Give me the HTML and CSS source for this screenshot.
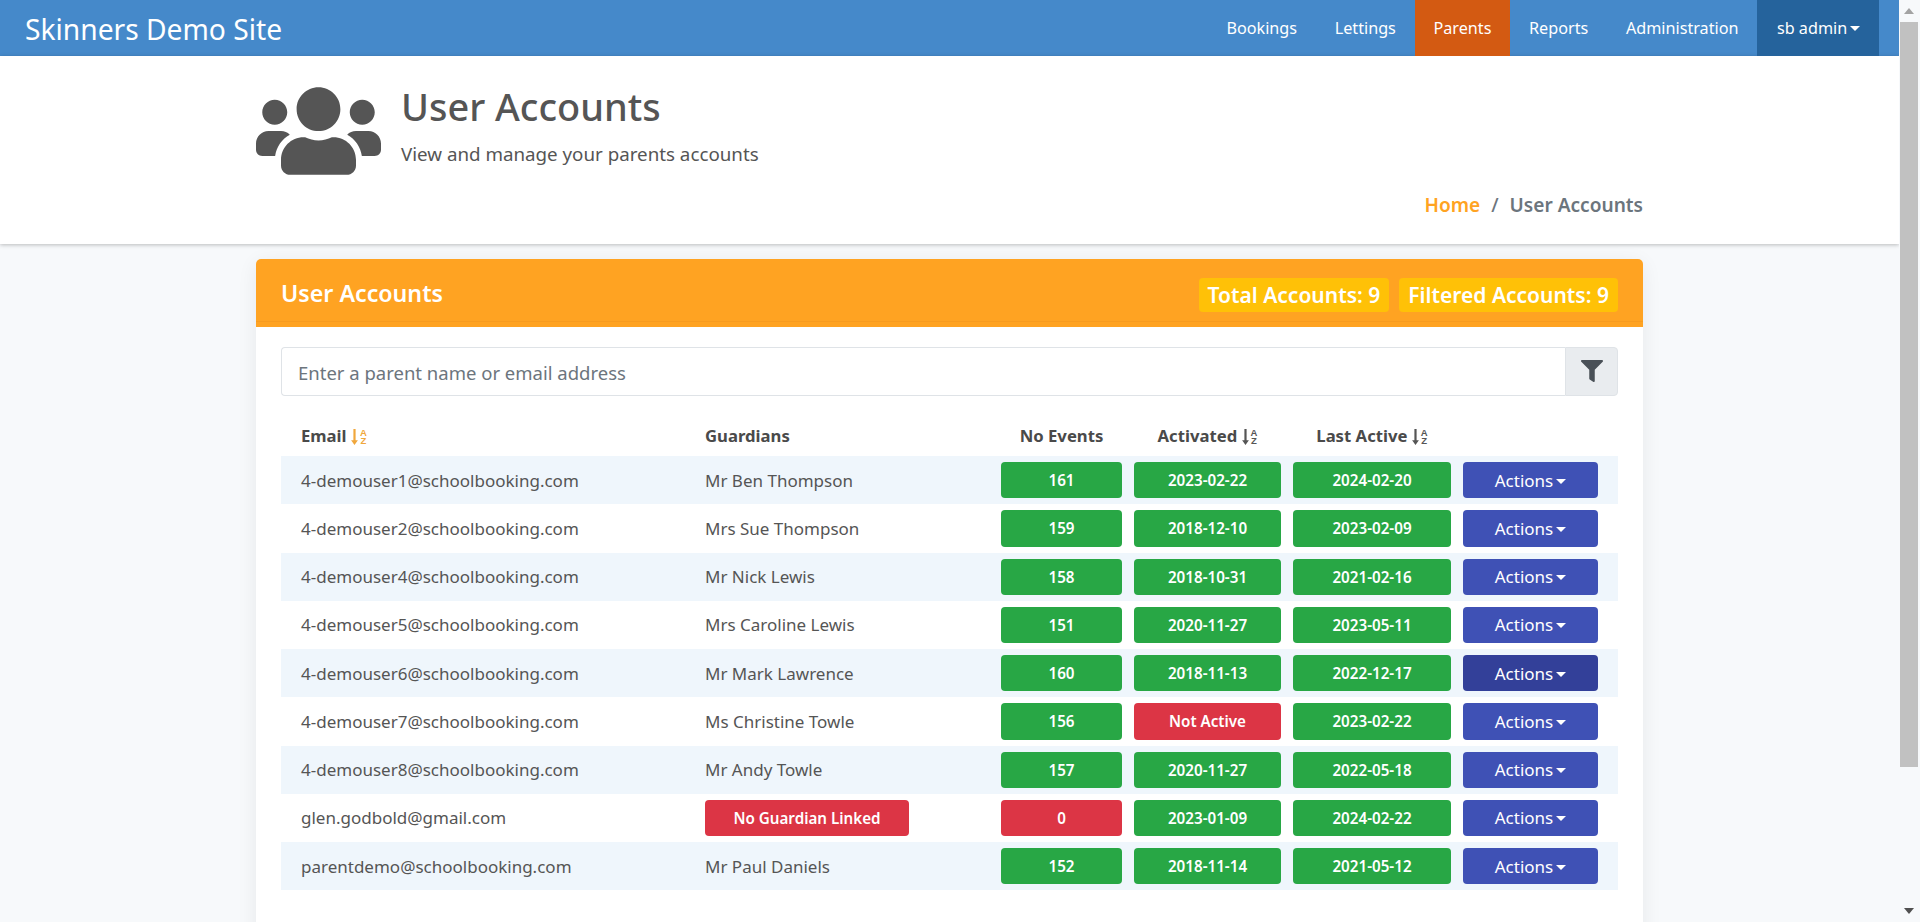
FILE: index.html
```html
<!DOCTYPE html>
<html lang="en">
<head>
  <meta charset="UTF-8" />
  <title>User Accounts</title>
  <link rel="stylesheet" href="styles.css">
</head>
<body>
  <svg class="icon-defs" width="0" height="0">
    <symbol id="caret" viewBox="0 0 10 5">
      <path d="M0 0h10L5 5z"/>
    </symbol>
    <symbol id="sort-arrow" viewBox="0 0 7 16">
      <path d="M2.4 0h2.2v11.2h2.3L3.5 16 .1 11.2h2.3z"/>
    </symbol>
  </svg>

  <div class="shell">
    <div class="page">
      <nav class="navbar">
        <a class="brand">Skinners Demo Site</a>
        <ul class="nav-links">
          <li>Bookings</li>
          <li>Lettings</li>
          <li class="active">Parents</li>
          <li>Reports</li>
          <li>Administration</li>
          <li class="user-menu">sb admin<svg class="caret"><use href="#caret"/></svg></li>
        </ul>
      </nav>

      <header class="page-header">
        <div class="container">
          <div class="header-top">
            <svg class="header-icon" viewBox="0 0 640 512"><path d="M96 224c35.3 0 64-28.7 64-64s-28.7-64-64-64-64 28.7-64 64 28.7 64 64 64zm448 0c35.3 0 64-28.7 64-64s-28.7-64-64-64-64 28.7-64 64 28.7 64 64 64zm32 32h-64c-17.6 0-33.5 7.1-45.1 18.6 40.3 22.1 68.9 62 75.1 109.4h66c17.7 0 32-14.3 32-32v-32c0-35.3-28.7-64-64-64zm-256 0c61.9 0 112-50.1 112-112S381.9 32 320 32 208 82.1 208 144s50.1 112 112 112zm76.8 32h-8.3c-20.8 10-43.9 16-68.5 16s-47.6-6-68.5-16h-8.3C179.6 288 128 339.6 128 403.2V432c0 26.5 21.5 48 48 48h288c26.5 0 48-21.5 48-48v-28.8c0-63.6-51.6-115.2-115.2-115.2zm-223.7-13.4C161.5 263.1 145.6 256 128 256H64c-35.3 0-64 28.7-64 64v32c0 17.7 14.3 32 32 32h65.9c6.3-47.4 34.9-87.3 75.2-109.4z"/></svg>
            <div class="header-text">
              <h1>User Accounts</h1>
              <p>View and manage your parents accounts</p>
            </div>
          </div>
          <div class="breadcrumb">
            <a>Home</a><span class="sep">/</span><span>User Accounts</span>
          </div>
        </div>
      </header>

      <main class="container">
        <section class="card">
          <div class="card-header">
            <h2>User Accounts</h2>
            <div class="counts">
              <span class="count">Total Accounts: 9</span>
              <span class="count">Filtered Accounts: 9</span>
            </div>
          </div>
          <div class="card-body">
            <div class="search">
              <input type="text" placeholder="Enter a parent name or email address">
              <button class="search-btn"><svg viewBox="0 0 512 512"><path d="M487.976 0H24.028C2.71 0-8.047 25.866 7.058 40.971L192 225.941V432c0 7.831 3.821 15.17 10.237 19.662l80 55.98C298.02 518.69 320 507.493 320 487.98V225.941l184.947-184.97C520.021 25.896 509.338 0 487.976 0z"/></svg></button>
            </div>

            <table class="accounts">
              <colgroup>
                <col class="col-email"><col class="col-guardian"><col class="col-events"><col class="col-activated"><col class="col-last"><col class="col-actions">
              </colgroup>
              <thead>
                <tr>
                  <th class="text-col">Email <span class="sort sort-on"><svg><use href="#sort-arrow"/></svg><span class="sort-az">A<br>Z</span></span></th>
                  <th class="text-col">Guardians</th>
                  <th>No Events</th>
                  <th>Activated <span class="sort"><svg><use href="#sort-arrow"/></svg><span class="sort-az">A<br>Z</span></span></th>
                  <th>Last Active <span class="sort"><svg><use href="#sort-arrow"/></svg><span class="sort-az">A<br>Z</span></span></th>
                  <th></th>
                </tr>
              </thead>
              <tbody>
                <tr>
                  <td class="text-col">4-demouser1@schoolbooking.com</td><td class="text-col">Mr Ben Thompson</td>
                  <td><span class="badge ok">161</span></td><td><span class="badge ok">2023-02-22</span></td><td><span class="badge ok">2024-02-20</span></td>
                  <td><button class="actions">Actions<svg class="caret"><use href="#caret"/></svg></button></td>
                </tr>
                <tr>
                  <td class="text-col">4-demouser2@schoolbooking.com</td><td class="text-col">Mrs Sue Thompson</td>
                  <td><span class="badge ok">159</span></td><td><span class="badge ok">2018-12-10</span></td><td><span class="badge ok">2023-02-09</span></td>
                  <td><button class="actions">Actions<svg class="caret"><use href="#caret"/></svg></button></td>
                </tr>
                <tr>
                  <td class="text-col">4-demouser4@schoolbooking.com</td><td class="text-col">Mr Nick Lewis</td>
                  <td><span class="badge ok">158</span></td><td><span class="badge ok">2018-10-31</span></td><td><span class="badge ok">2021-02-16</span></td>
                  <td><button class="actions">Actions<svg class="caret"><use href="#caret"/></svg></button></td>
                </tr>
                <tr>
                  <td class="text-col">4-demouser5@schoolbooking.com</td><td class="text-col">Mrs Caroline Lewis</td>
                  <td><span class="badge ok">151</span></td><td><span class="badge ok">2020-11-27</span></td><td><span class="badge ok">2023-05-11</span></td>
                  <td><button class="actions">Actions<svg class="caret"><use href="#caret"/></svg></button></td>
                </tr>
                <tr>
                  <td class="text-col">4-demouser6@schoolbooking.com</td><td class="text-col">Mr Mark Lawrence</td>
                  <td><span class="badge ok">160</span></td><td><span class="badge ok">2018-11-13</span></td><td><span class="badge ok">2022-12-17</span></td>
                  <td><button class="actions hover">Actions<svg class="caret"><use href="#caret"/></svg></button></td>
                </tr>
                <tr>
                  <td class="text-col">4-demouser7@schoolbooking.com</td><td class="text-col">Ms Christine Towle</td>
                  <td><span class="badge ok">156</span></td><td><span class="badge bad">Not Active</span></td><td><span class="badge ok">2023-02-22</span></td>
                  <td><button class="actions">Actions<svg class="caret"><use href="#caret"/></svg></button></td>
                </tr>
                <tr>
                  <td class="text-col">4-demouser8@schoolbooking.com</td><td class="text-col">Mr Andy Towle</td>
                  <td><span class="badge ok">157</span></td><td><span class="badge ok">2020-11-27</span></td><td><span class="badge ok">2022-05-18</span></td>
                  <td><button class="actions">Actions<svg class="caret"><use href="#caret"/></svg></button></td>
                </tr>
                <tr>
                  <td class="text-col">glen.godbold@gmail.com</td><td class="text-col"><span class="badge bad no-guardian">No Guardian Linked</span></td>
                  <td><span class="badge bad">0</span></td><td><span class="badge ok">2023-01-09</span></td><td><span class="badge ok">2024-02-22</span></td>
                  <td><button class="actions">Actions<svg class="caret"><use href="#caret"/></svg></button></td>
                </tr>
                <tr>
                  <td class="text-col">parentdemo@schoolbooking.com</td><td class="text-col">Mr Paul Daniels</td>
                  <td><span class="badge ok">152</span></td><td><span class="badge ok">2018-11-14</span></td><td><span class="badge ok">2021-05-12</span></td>
                  <td><button class="actions">Actions<svg class="caret"><use href="#caret"/></svg></button></td>
                </tr>
              </tbody>
            </table>
          </div>
        </section>
      </main>
    </div>

    <div class="scrollbar">
      <span class="arrow-up"></span>
      <span class="thumb"></span>
      <span class="arrow-down"></span>
    </div>
  </div>
</body>
</html>
```

FILE: styles.css
```css
* {
  box-sizing: border-box;
}

html, body {
  height: 100%;
  margin: 0;
  overflow: hidden;
}

body {
  font-family: "Noto Sans", Arial, sans-serif;
  font-size: 17px;
  color: #555;
  background: #f7f9fb;
}

.icon-defs {
  position: absolute;
}

.shell {
  display: flex;
  height: 100%;
}

.page {
  flex: 1;
  min-width: 0;
  overflow: hidden;
}

.container {
  width: 1387px;
  margin: 0 auto;
}

/* top bar */
.navbar {
  display: flex;
  justify-content: space-between;
  height: 56px;
  padding: 0 20px 0 25px;
  background: #4589ca;
  color: #fff;
}

.brand {
  font-size: 28.2px;
  line-height: 58px;
}

.nav-links {
  display: flex;
  margin: 0;
  padding: 0;
  list-style: none;
  font-size: 16.2px;
  line-height: 56px;
}

.nav-links li {
  padding: 0 18.8px;
}

.nav-links .active {
  background: #d35a12;
}

.nav-links .user-menu {
  padding-left: 19.6px;
  background: #25639c;
}

.caret {
  width: 10px;
  height: 5px;
  margin-left: 3px;
  vertical-align: 3px;
  fill: #fff;
}

/* page title */
.page-header {
  height: 188px;
  padding-top: 25px;
  background: #fff;
  box-shadow: 0 1px 4px rgba(0, 0, 0, 0.25);
}

.header-top {
  display: flex;
  gap: 20px;
}

.header-icon {
  width: 125px;
  height: 100px;
  fill: #555;
}

h1 {
  margin: 0;
  font-size: 37.9px;
  font-weight: 500;
  line-height: 50px;
}

.header-text p {
  margin: 10px 0 0;
  font-size: 18.75px;
}

.breadcrumb {
  display: flex;
  justify-content: flex-end;
  margin-top: 10px;
  font-size: 19.1px;
  font-weight: 600;
  line-height: 28px;
  color: #6c757d;
}

.breadcrumb a {
  color: #ffa322;
}

.sep {
  margin: 0 11px;
  font-weight: 500;
}

/* card */
.card {
  min-height: 700px;
  margin-top: 15px;
  background: #fff;
  border-radius: 5px;
  box-shadow: 0 4px 20px rgba(0, 0, 0, 0.07);
}

.card-header {
  display: flex;
  justify-content: space-between;
  align-items: center;
  height: 68px;
  padding: 0 25px;
  background: #ffa322;
  border-radius: 5px 5px 0 0;
  box-shadow: inset 0 -5px 0 #ffa322, inset 0 -6px 0 #f79b20;
  color: #fff;
}

h2 {
  margin: 0;
  font-size: 23.2px;
  font-weight: 600;
}

.counts {
  display: flex;
  gap: 10px;
  margin-top: 4px;
}

.count {
  height: 34px;
  padding: 0 9px;
  background: #ffc107;
  border-radius: 4px;
  font-size: 21px;
  font-weight: 600;
  line-height: 34px;
}

.card-body {
  padding: 20px 25px;
}

.search {
  display: flex;
  height: 49px;
}

.search input {
  flex: 1;
  padding: 2px 16px 0;
  border: 1px solid #dfe3e7;
  border-right: 0;
  border-radius: 4px 0 0 4px;
  font: inherit;
  font-size: 18.5px;
}

.search input::placeholder {
  color: #6c757d;
}

.search-btn {
  width: 53px;
  padding: 0;
  background: #e9ecef;
  border: 1px solid #dfe3e7;
  border-radius: 0 4px 4px 0;
}

.search-btn svg {
  display: block;
  width: 22px;
  height: 22px;
  margin: -2px auto 0;
  fill: #495057;
}

/* table */
.accounts {
  width: 100%;
  margin-top: 18px;
  border-collapse: collapse;
  table-layout: fixed;
}

.col-email { width: 404px; }
.col-guardian { width: 310px; }
.col-events { width: 133px; }
.col-activated { width: 159px; }
.col-last { width: 170px; }
.col-actions { width: 161px; }

th {
  height: 42px;
  padding: 0 6px;
  font-size: 16.7px;
  font-weight: 700;
  color: #4a4a4a;
  text-align: center;
}

td {
  padding: 6px;
}

th.text-col, td.text-col {
  padding-left: 20px;
  text-align: left;
}

tbody tr:nth-child(odd) {
  background: #eff6fc;
}

.sort {
  display: inline-flex;
  gap: 2px;
  height: 17px;
  vertical-align: -3px;
  fill: #555;
  color: #555;
}

.sort svg {
  width: 7px;
  height: 16px;
}

.sort-on {
  fill: #f0a73c;
  color: #f0a73c;
}

.sort-az {
  font-family: "Liberation Sans", Arial, sans-serif;
  font-size: 9.5px;
  font-weight: 700;
  line-height: 8.8px;
  text-align: center;
}

.badge {
  display: block;
  height: 36.25px;
  border-radius: 4px;
  font-size: 15.2px;
  font-weight: 600;
  line-height: 36px;
  color: #fff;
  text-align: center;
}

.ok {
  background: #28a745;
}

.bad {
  background: #dc3545;
}

.no-guardian {
  width: 204px;
}

.actions {
  display: block;
  width: 135px;
  height: 36.25px;
  padding: 0;
  background: #3f51b5;
  border: 0;
  border-radius: 4px;
  font: inherit;
  font-size: 17px;
  color: #fff;
}

.actions.hover {
  background: #334099;
}

/* browser scrollbar */
.scrollbar {
  position: relative;
  width: 21px;
  background: #f7f9fb;
}

.thumb {
  position: absolute;
  top: 22px;
  left: 1px;
  width: 18px;
  height: 745px;
  background: #c1c1c1;
}

.arrow-up, .arrow-down {
  position: absolute;
  left: 5px;
  width: 0;
  height: 0;
  border-left: 5px solid transparent;
  border-right: 5px solid transparent;
}

.arrow-up {
  top: 8px;
  border-bottom: 6px solid #a3a3a3;
}

.arrow-down {
  bottom: 8px;
  border-top: 6px solid #505050;
}
```
